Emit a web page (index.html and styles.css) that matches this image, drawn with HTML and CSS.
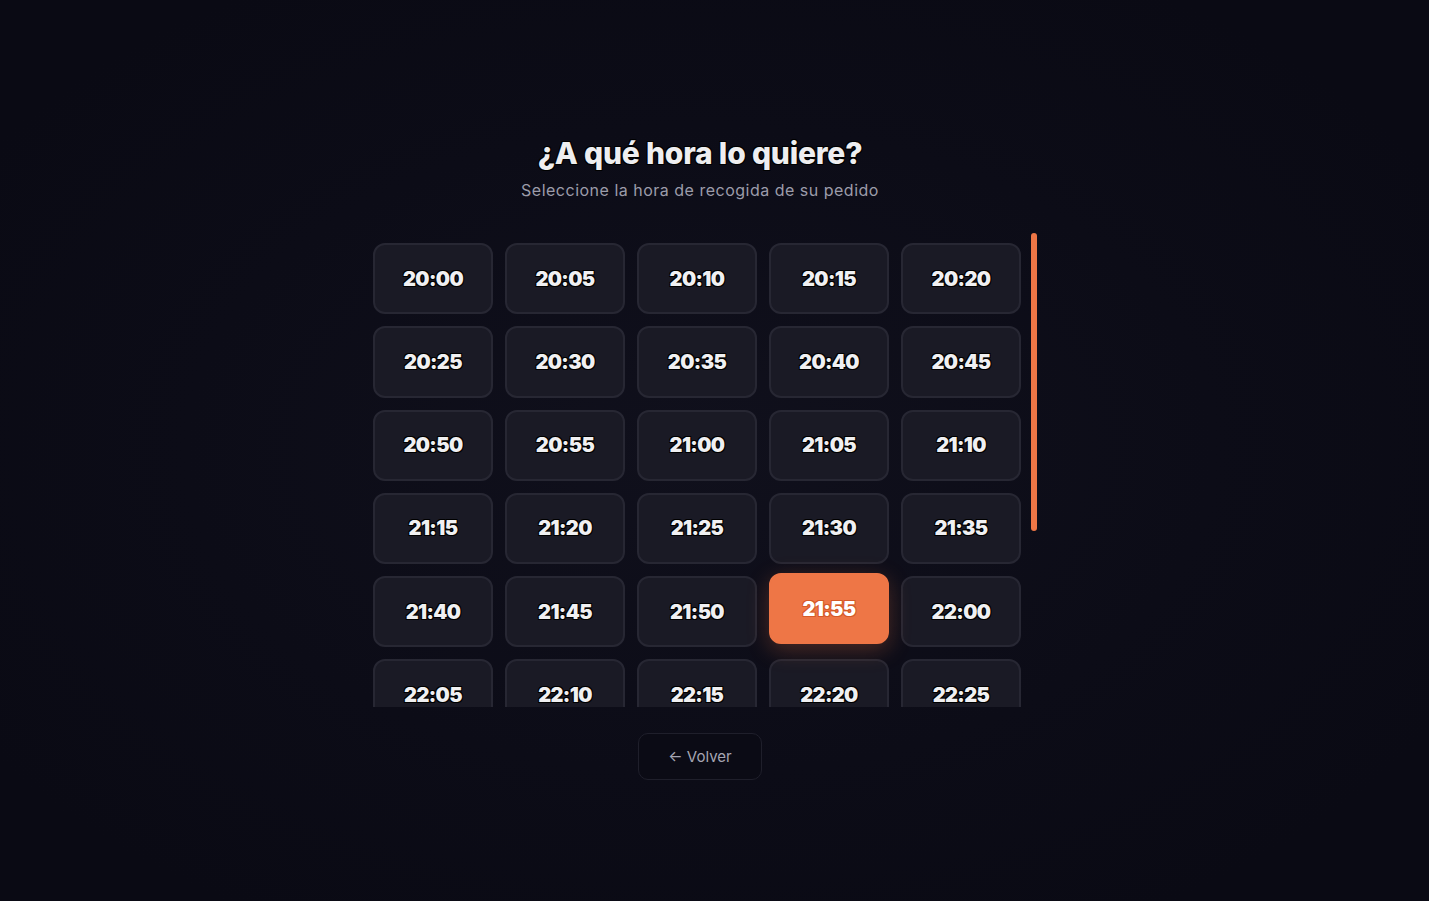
FILE: index.html
```html
<!DOCTYPE html>
<html lang="es">
<head>
<meta charset="utf-8">
<title>Hora de recogida</title>
<link rel="stylesheet" href="styles.css">
</head>
<body>
<main class="page">
  <h1 class="title">¿A qué hora lo quiere?</h1>
  <p class="subtitle">Seleccione la hora de recogida de su pedido</p>
  <div class="picker">
    <div class="scroller">
      <div class="grid">
        <button class="slot">20:00</button>
        <button class="slot">20:05</button>
        <button class="slot">20:10</button>
        <button class="slot">20:15</button>
        <button class="slot">20:20</button>
        <button class="slot">20:25</button>
        <button class="slot">20:30</button>
        <button class="slot">20:35</button>
        <button class="slot">20:40</button>
        <button class="slot">20:45</button>
        <button class="slot">20:50</button>
        <button class="slot">20:55</button>
        <button class="slot">21:00</button>
        <button class="slot">21:05</button>
        <button class="slot">21:10</button>
        <button class="slot">21:15</button>
        <button class="slot">21:20</button>
        <button class="slot">21:25</button>
        <button class="slot">21:30</button>
        <button class="slot">21:35</button>
        <button class="slot">21:40</button>
        <button class="slot">21:45</button>
        <button class="slot">21:50</button>
        <button class="slot selected">21:55</button>
        <button class="slot">22:00</button>
        <button class="slot">22:05</button>
        <button class="slot">22:10</button>
        <button class="slot">22:15</button>
        <button class="slot">22:20</button>
        <button class="slot">22:25</button>
        <button class="slot">22:30</button>
        <button class="slot">22:35</button>
        <button class="slot">22:40</button>
        <button class="slot">22:45</button>
        <button class="slot">22:50</button>
        <button class="slot">22:55</button>
        <button class="slot">23:00</button>
        <button class="slot">23:05</button>
        <button class="slot">23:10</button>
        <button class="slot">23:15</button>
        <button class="slot">23:20</button>
        <button class="slot">23:25</button>
        <button class="slot">23:30</button>
        <button class="slot">23:35</button>
        <button class="slot">23:40</button>
      </div>
    </div>
    <div class="track"><div class="thumb"></div></div>
  </div>
  <button class="back">← Volver</button>
</main>
</body>
</html>
```

FILE: styles.css
```css
* { box-sizing: border-box; }
html, body { margin: 0; padding: 0; }
body {
  min-height: 100vh;
  background: radial-gradient(ellipse 60% 60% at 49% 50%, #10101c 0%, #0c0c17 60%, #0a0a14 100%);
  background-color: #0a0a14;
  font-family: Inter, "Noto Sans", sans-serif;
  color: #f0f0f2;
  overflow: hidden;
}
.page {
  display: flex;
  flex-direction: column;
  align-items: center;
  padding-top: 135px;
  padding-right: 29px;
}
.title {
  margin: 0;
  font-size: 30px;
  line-height: 36px;
  font-weight: 800;
  letter-spacing: -0.2px;
  color: #eeeef0;
  text-shadow: 1px 1px 0 #000, -1px -1px 0 #000, 1px -1px 0 #000, -1px 1px 0 #000;
}
.subtitle {
  margin: 7px 0 0;
  font-size: 16px;
  line-height: 24px;
  letter-spacing: 0.5px;
  color: #9c9caa;
}
.picker {
  margin-top: 31px;
  display: flex;
  width: 674px;
  height: 474px;
}
.scroller {
  flex: 1;
  overflow: hidden;
  padding: 10px;
}
.track {
  width: 6px;
  flex: none;
}
.thumb {
  height: 298px;
  border-radius: 3px;
  background: #ee7646;
}
.grid {
  display: grid;
  grid-template-columns: repeat(5, 120px);
  grid-auto-rows: 71.25px;
  gap: 12px;
}
.slot {
  border: 2px solid #272733;
  border-radius: 12px;
  background: #1a1a25;
  color: #f0f0f2;
  font-family: Inter, "Noto Sans", sans-serif;
  font-size: 20px;
  font-weight: 900;
  letter-spacing: -0.6px;
  text-shadow: 1px 1px 0 #000, -1px -1px 0 #000, 1px -1px 0 #000, -1px 1px 0 #000;
  padding: 0;
}
.slot.selected {
  background: #ee7646;
  border-color: #ee7646;
  color: #fff;
  transform: translateY(-3px);
  box-shadow: 0 6px 22px rgba(238, 118, 70, 0.28);
  text-shadow: 1px 1px 0 #d65a28, -1px -1px 0 #d65a28, 1px -1px 0 #d65a28, -1px 1px 0 #d65a28;
}
.back {
  margin-top: 26px;
  width: 124px;
  height: 47px;
  border: 1px solid #1f1f2b;
  border-radius: 10px;
  background: #0b0b15;
  color: #a6a6b3;
  font-family: Inter, "Noto Sans", sans-serif;
  font-size: 15px;
}
```
